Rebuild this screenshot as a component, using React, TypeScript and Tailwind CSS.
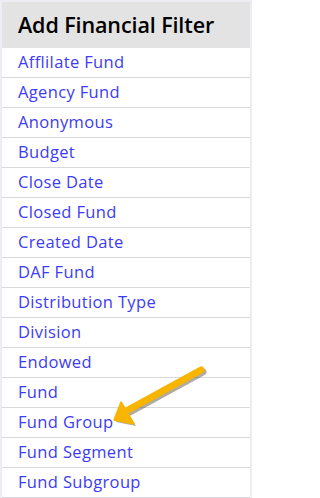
import React from 'react';

const items = [
  'Afflilate Fund',
  'Agency Fund',
  'Anonymous',
  'Budget',
  'Close Date',
  'Closed Fund',
  'Created Date',
  'DAF Fund',
  'Distribution Type',
  'Division',
  'Endowed',
  'Fund',
  'Fund Group',
  'Fund Segment',
  'Fund Subgroup',
];

const App: React.FC = () => {
  return (
    <div className="relative w-[252px] h-[498px] bg-[#eceef3] px-[2px] pt-[2px] overflow-hidden font-['Open_Sans',sans-serif]">
      <div className="bg-white h-full">
        <div className="h-[46px] bg-[#e3e3e3] flex items-center pl-[16px]">
          <h2 className="text-[21.5px] font-semibold text-black tracking-[-0.1px]">Add Financial Filter</h2>
        </div>
        <ul>
          {items.map(item => (
            <li
              key={item}
              className="h-[30px] border-b border-[#d9d9dd] flex items-center pl-[16px]"
            >
              <a href="#" className="text-[16.5px] text-[#3c3cf4] leading-none tracking-[0.35px]">
                {item}
              </a>
            </li>
          ))}
        </ul>
      </div>

      {/* callout arrow pointing at Fund Group */}
      <svg className="absolute left-0 top-0 pointer-events-none" width="252" height="498" viewBox="0 0 252 498">
        <g transform="translate(2,2)" opacity="0.4">
          <path d="M201 370 L128 410" stroke="#3a3020" strokeWidth="7" strokeLinecap="round" fill="none" />
          <path d="M114 420 L121 402 L134 424 Z" fill="#3a3020" />
        </g>
        <path d="M201 370 L128 410" stroke="#f7b500" strokeWidth="7" strokeLinecap="round" fill="none" />
        <path d="M114 420 L121 402 L134 424 Z" fill="#f7b500" stroke="#f7b500" strokeWidth="1.5" strokeLinejoin="round" />
      </svg>
    </div>
  );
};

export default App;
